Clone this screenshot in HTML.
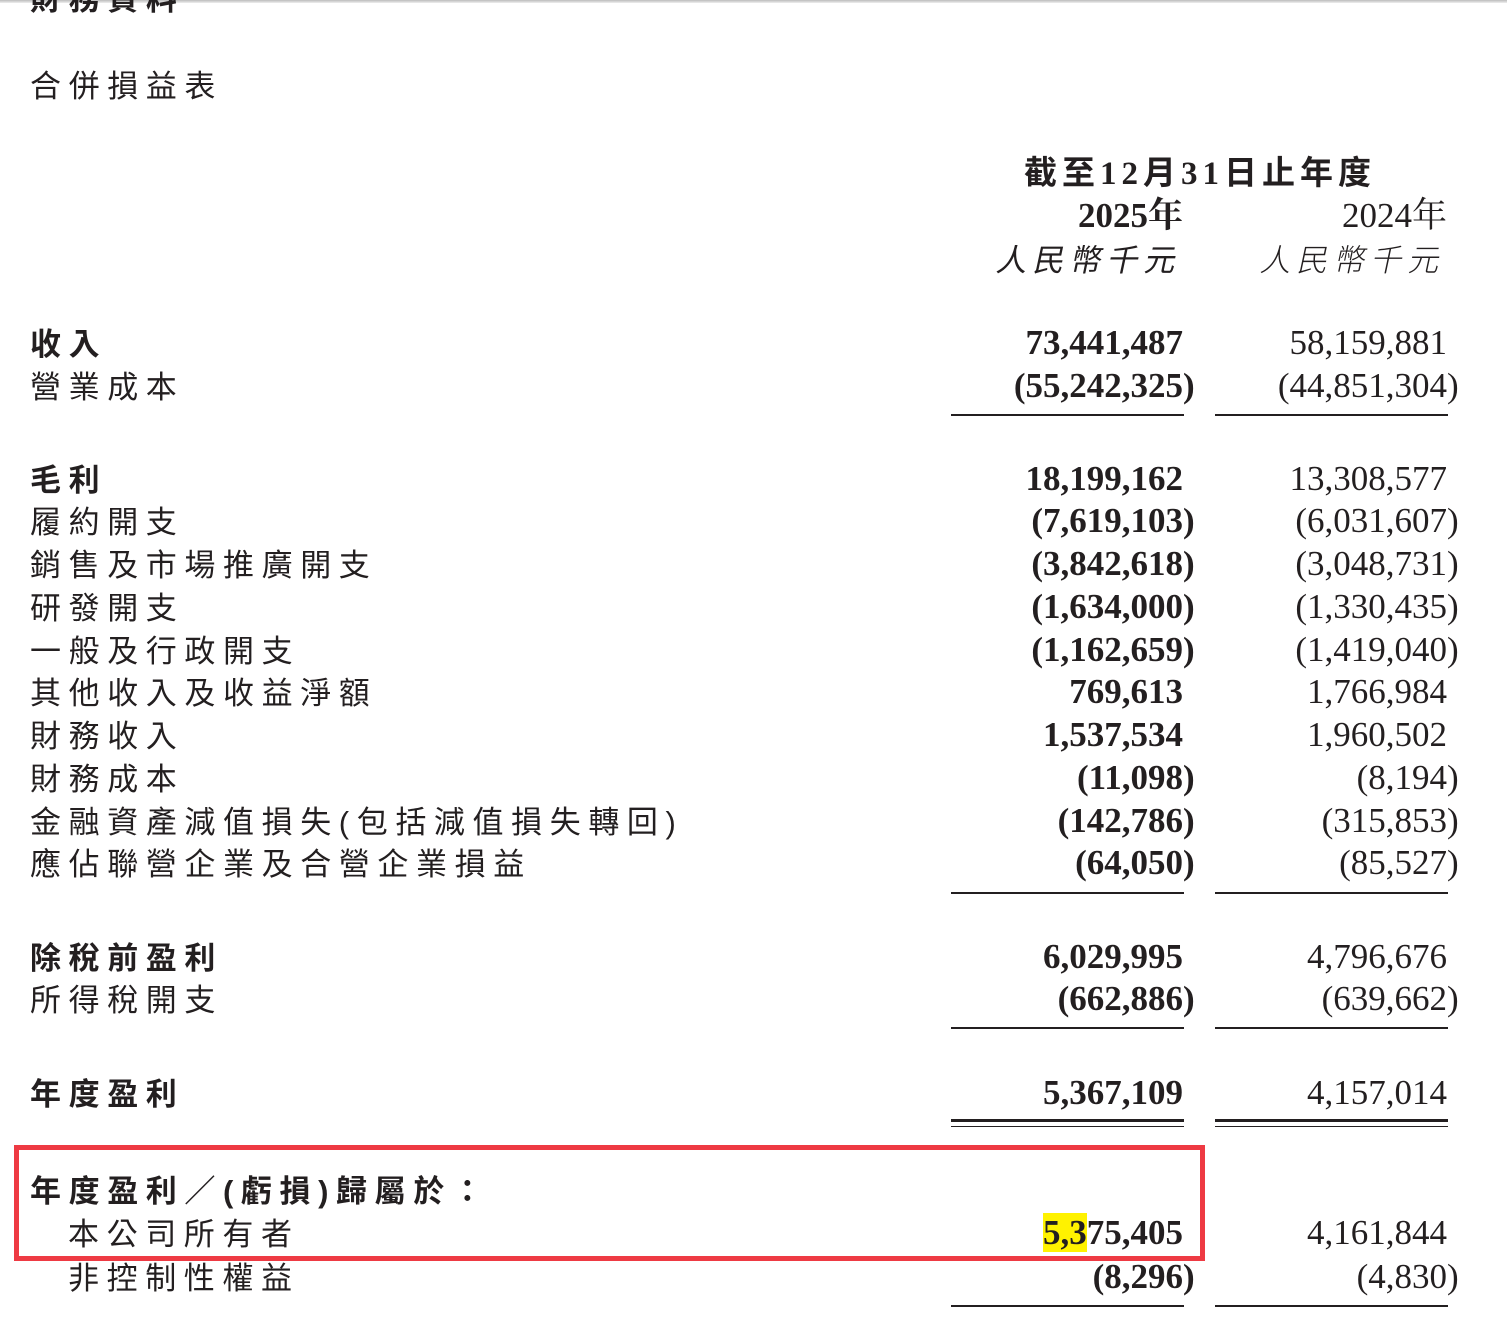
<!DOCTYPE html>
<html><head><meta charset="utf-8"><style>
html,body{margin:0;padding:0;background:#fff;width:1507px;height:1339px;overflow:hidden;position:relative}
.l{position:absolute;left:30px;font-family:"Liberation Sans","Noto Sans CJK TC",sans-serif;font-size:31px;letter-spacing:7.6px;line-height:44px;color:#231f20;white-space:nowrap;margin-top:2px}
.b{font-weight:bold}
.n{position:absolute;font-family:"Liberation Serif","Noto Serif CJK SC",serif;font-size:35px;line-height:44px;color:#231f20;text-align:right;white-space:nowrap}
.c1{right:324px}.c2{right:60px}
.n .p{display:inline-block;width:0;overflow:visible}
.hl{position:absolute;height:2px;background:#231f20}
.a{left:951px;width:233px}.z{left:1215px;width:233px}
</style></head><body>
<div style="position:absolute;left:0;top:0;width:1507px;height:3px;background:linear-gradient(#bbb,#eee)"></div>
<div class="l b" style="top:-24px">財務資料</div>
<div class="l" style="top:63px">合併損益表</div>

<div class="n b" style="left:1000px;width:400px;text-align:center;top:152px;font-family:'Liberation Serif','Noto Sans CJK TC',serif;font-size:33px;letter-spacing:5px">截至12月31日止年度</div>
<div class="n b c1" style="top:194px">2025年</div>
<div class="n c2" style="top:194px">2024年</div>
<div class="n c1" style="top:236px;font-family:'Noto Sans CJK TC',sans-serif;font-size:31px;letter-spacing:6px;transform:skewX(-12deg)">人民幣千元</div>
<div class="n c2" style="top:236px;font-family:'Noto Sans CJK TC',sans-serif;font-size:31px;letter-spacing:6px;font-weight:300;transform:skewX(-12deg)">人民幣千元</div>

<div class="l b" style="top:321px">收入</div>
<div class="n b c1" style="top:321px">73,441,487</div><div class="n c2" style="top:321px">58,159,881</div>
<div class="l" style="top:364px">營業成本</div>
<div class="n b c1" style="top:364px">(55,242,325<span class="p">)</span></div><div class="n c2" style="top:364px">(44,851,304<span class="p">)</span></div>
<div class="hl a" style="top:414px"></div><div class="hl z" style="top:414px"></div>

<div class="l b" style="top:457px">毛利</div>
<div class="n b c1" style="top:457px">18,199,162</div><div class="n c2" style="top:457px">13,308,577</div>
<div class="l" style="top:499px">履約開支</div>
<div class="n b c1" style="top:499px">(7,619,103<span class="p">)</span></div><div class="n c2" style="top:499px">(6,031,607<span class="p">)</span></div>
<div class="l" style="top:542px">銷售及市場推廣開支</div>
<div class="n b c1" style="top:542px">(3,842,618<span class="p">)</span></div><div class="n c2" style="top:542px">(3,048,731<span class="p">)</span></div>
<div class="l" style="top:585px">研發開支</div>
<div class="n b c1" style="top:585px">(1,634,000<span class="p">)</span></div><div class="n c2" style="top:585px">(1,330,435<span class="p">)</span></div>
<div class="l" style="top:628px">一般及行政開支</div>
<div class="n b c1" style="top:628px">(1,162,659<span class="p">)</span></div><div class="n c2" style="top:628px">(1,419,040<span class="p">)</span></div>
<div class="l" style="top:670px">其他收入及收益淨額</div>
<div class="n b c1" style="top:670px">769,613</div><div class="n c2" style="top:670px">1,766,984</div>
<div class="l" style="top:713px">財務收入</div>
<div class="n b c1" style="top:713px">1,537,534</div><div class="n c2" style="top:713px">1,960,502</div>
<div class="l" style="top:756px">財務成本</div>
<div class="n b c1" style="top:756px">(11,098<span class="p">)</span></div><div class="n c2" style="top:756px">(8,194<span class="p">)</span></div>
<div class="l" style="top:799px">金融資產減值損失(包括減值損失轉回)</div>
<div class="n b c1" style="top:799px">(142,786<span class="p">)</span></div><div class="n c2" style="top:799px">(315,853<span class="p">)</span></div>
<div class="l" style="top:841px">應佔聯營企業及合營企業損益</div>
<div class="n b c1" style="top:841px">(64,050<span class="p">)</span></div><div class="n c2" style="top:841px">(85,527<span class="p">)</span></div>
<div class="hl a" style="top:892px"></div><div class="hl z" style="top:892px"></div>

<div class="l b" style="top:935px">除稅前盈利</div>
<div class="n b c1" style="top:935px">6,029,995</div><div class="n c2" style="top:935px">4,796,676</div>
<div class="l" style="top:977px">所得稅開支</div>
<div class="n b c1" style="top:977px">(662,886<span class="p">)</span></div><div class="n c2" style="top:977px">(639,662<span class="p">)</span></div>
<div class="hl a" style="top:1027px"></div><div class="hl z" style="top:1027px"></div>

<div class="l b" style="top:1071px">年度盈利</div>
<div class="n b c1" style="top:1071px">5,367,109</div><div class="n c2" style="top:1071px">4,157,014</div>
<div class="hl a" style="top:1119px;height:3px"></div><div class="hl z" style="top:1119px;height:3px"></div>
<div class="hl a" style="top:1126px;height:1px"></div><div class="hl z" style="top:1126px;height:1px"></div>

<div style="position:absolute;left:14px;top:1145px;width:1181px;height:106px;border:5px solid #ee3a43"></div>
<div class="l b" style="top:1168px">年度盈利／(虧損)歸屬於：</div>
<div class="l" style="top:1211px;left:68px">本公司所有者</div>
<div class="n b c1" style="top:1211px"><span style="background:#fff200">5,3</span>75,405</div><div class="n c2" style="top:1211px">4,161,844</div>
<div class="l" style="top:1255px;left:68px">非控制性權益</div>
<div class="n b c1" style="top:1255px">(8,296<span class="p">)</span></div><div class="n c2" style="top:1255px">(4,830<span class="p">)</span></div>
<div class="hl a" style="top:1305px"></div><div class="hl z" style="top:1305px"></div>
</body></html>
